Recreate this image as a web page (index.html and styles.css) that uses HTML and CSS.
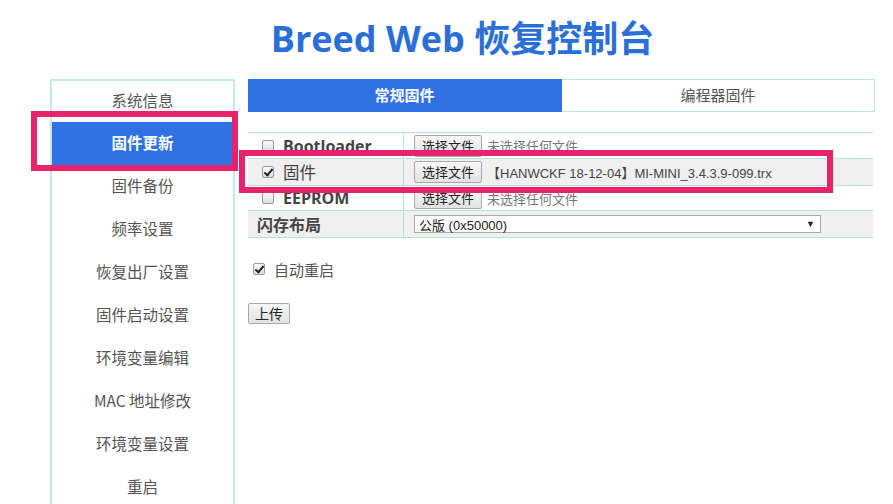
FILE: index.html
```html
<!DOCTYPE html>
<html lang="zh-CN">
<head>
<meta charset="utf-8">
<title>Breed Web 恢复控制台</title>
<link rel="stylesheet" href="styles.css">
</head>
<body>
<div class="page">
  <h1 class="title">Breed Web 恢复控制台</h1>
  <div class="main">
    <nav class="sidebar">
      <div class="nav-item">系统信息</div>
      <div class="nav-item active">固件更新</div>
      <div class="nav-item">固件备份</div>
      <div class="nav-item">频率设置</div>
      <div class="nav-item">恢复出厂设置</div>
      <div class="nav-item">固件启动设置</div>
      <div class="nav-item">环境变量编辑</div>
      <div class="nav-item">MAC 地址修改</div>
      <div class="nav-item">环境变量设置</div>
      <div class="nav-item">重启</div>
    </nav>
    <section class="content">
      <div class="tabs">
        <div class="tab tab-active">常规固件</div>
        <div class="tab">编程器固件</div>
      </div>
      <div class="table">
        <div class="row">
          <div class="cell-label"><span class="cb"></span><span class="label-text">Bootloader</span></div>
          <div class="cell-value"><span class="btn">选择文件</span><span class="file-name muted">未选择任何文件</span></div>
        </div>
        <div class="row gray">
          <div class="cell-label"><span class="cb checked"></span><span class="label-text cjk">固件</span></div>
          <div class="cell-value"><span class="btn">选择文件</span><span class="file-name">【HANWCKF 18-12-04】MI-MINI_3.4.3.9-099.trx</span></div>
        </div>
        <div class="row">
          <div class="cell-label"><span class="cb"></span><span class="label-text">EEPROM</span></div>
          <div class="cell-value"><span class="btn">选择文件</span><span class="file-name muted">未选择任何文件</span></div>
        </div>
        <div class="row gray">
          <div class="cell-label plain"><span class="label-text">闪存布局</span></div>
          <div class="cell-value"><div class="select"><span>公版 (0x50000)</span><span class="arrow">▼</span></div></div>
        </div>
      </div>
      <div class="auto-reboot"><span class="cb checked"></span><span>自动重启</span></div>
      <div class="upload"><span class="btn btn-upload">上传</span></div>
    </section>
  </div>
  <div class="highlight hl-nav"></div>
  <div class="highlight hl-row"></div>
</div>
</body>
</html>
```
FILE: styles.css
```css
* { box-sizing: border-box; }
html, body { margin: 0; padding: 0; background: #fff; overflow: hidden; }
body {
  font-family: "Noto Sans CJK SC", "Open Sans", sans-serif;
  color: #555;
  width: 893px;
  height: 504px;
}
.page {
  position: relative;
  margin-left: 50px;
  width: 825px;
}
.title {
  margin: 0;
  padding-top: 18px;
  height: 79px;
  line-height: 42px;
  font-size: 36px;
  font-weight: 700;
  color: #2b6fd6;
  text-align: center;
  font-family: "Open Sans", "Noto Sans CJK SC", sans-serif;
}
.main {
  display: flex;
  gap: 13px;
  align-items: flex-start;
}
.sidebar {
  width: 185px;
  height: 440px;
  border: 2px solid #c4e9e8;
  border-bottom: none;
  flex: none;
}
.nav-item {
  height: 43px;
  line-height: 40px;
  padding-bottom: 3px;
  text-align: center;
  font-size: 15.5px;
  color: #555;
}
.nav-item:first-child { height: 41px; line-height: 38px; }
.nav-item.active {
  background: #2f72e3;
  color: #fff;
  font-weight: 700;
}
.content {
  width: 627px;
  flex: none;
}
.tabs {
  display: flex;
  height: 33px;
}
.tab {
  flex: 1;
  text-align: center;
  line-height: 30px;
  font-size: 15px;
  color: #555;
  border: 1px solid #bfe8e3;
  border-left: none;
}
.tab-active {
  flex: none;
  width: 314px;
  background: #2f72e3;
  border-color: #2f72e3;
  color: #fff;
  font-weight: 700;
}
.table {
  margin-top: 20px;
  width: 625px;
  border-top: 1px solid #b3e4da;
}
.row {
  display: flex;
  height: 27px;
  border-bottom: 1px solid #b3e4da;
}
.row:nth-child(1) { height: 26px; }
.row:nth-child(3) { height: 25px; }
.row.gray { background: #f0f0f0; }
.cell-label {
  width: 156px;
  flex: none;
  display: flex;
  align-items: center;
  padding-left: 14px;
  gap: 9px;
  border-right: 1px solid #b3e4da;
}
.cell-label.plain { padding-left: 9px; }
.label-text {
  font-size: 16px;
  font-weight: 700;
  color: #444;
  font-family: "Open Sans", "Noto Sans CJK SC", sans-serif;
}
.label-text.cjk { font-weight: 400; font-size: 16.5px; }
.cell-value {
  flex: 1;
  display: flex;
  align-items: center;
  padding-left: 10px;
  gap: 5px;
}
.btn {
  display: inline-block;
  height: 22px;
  line-height: 20px;
  padding: 0 7px;
  font-size: 13px;
  color: #222;
  border: 1px solid #a9a9a9;
  border-radius: 2px;
  background: linear-gradient(#f7f7f7, #e2e2e2);
}
.file-name {
  font-size: 13px;
  color: #444;
  font-family: "Liberation Sans", "Noto Sans CJK SC", sans-serif;
}
.file-name.muted { color: #777; font-family: "Noto Sans CJK SC", sans-serif; }
.select {
  width: 407px;
  height: 18px;
  border: 1px solid #a9a9a9;
  background: #fff;
  display: flex;
  justify-content: space-between;
  align-items: center;
  padding: 0 5px 0 4px;
  font-size: 13px;
  color: #222;
  font-family: "Liberation Sans", "Noto Sans CJK SC", sans-serif;
}
.arrow { font-size: 9px; color: #222; }
.cb {
  display: inline-block;
  width: 12px;
  height: 12px;
  border: 1px solid #9a9a9a;
  border-radius: 2px;
  background: linear-gradient(#fdfdfd, #dcdcdc);
  position: relative;
  flex: none;
}
.cb.checked::after {
  content: "";
  position: absolute;
  left: 3px;
  top: 0px;
  width: 3px;
  height: 7px;
  border: solid #222;
  border-width: 0 2px 2px 0;
  transform: rotate(40deg);
}
.auto-reboot {
  margin-top: 21px;
  margin-left: 5px;
  display: flex;
  align-items: center;
  gap: 9px;
  font-size: 15px;
  color: #555;
  height: 20px;
}
.upload { margin-top: 21px; }
.btn-upload {
  height: 21px;
  line-height: 19px;
  font-size: 14px;
  padding: 0 6px;
}
.highlight {
  position: absolute;
  border: 6px solid #e8236b;
  pointer-events: none;
}
.hl-nav { left: -19px; top: 111px; width: 207px; height: 60px; }
.hl-row { left: 189px; top: 150px; width: 594px; height: 43px; }
```
